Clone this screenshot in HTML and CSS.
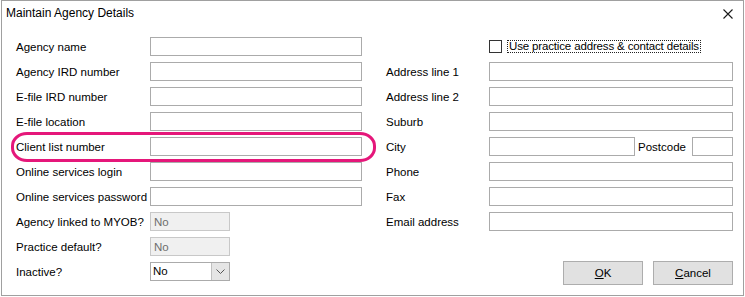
FILE: index.html
```html
<!DOCTYPE html>
<html lang="en">
<head>
  <meta charset="UTF-8">
  <title>Maintain Agency Details</title>
  <link rel="stylesheet" href="styles.css">
</head>
<body>
  <div class="dialog">
    <div class="title-bar">
      <span class="title">Maintain Agency Details</span>
      <svg class="close" width="10" height="10" viewBox="0 0 10 10">
        <path d="M0.5 0.5 L9.5 9.5 M9.5 0.5 L0.5 9.5" stroke="#1a1a1a" stroke-width="1.1" fill="none"/>
      </svg>
    </div>

    <div class="content">
      <!-- Left column -->
      <div class="form-grid left">
        <label>Agency name</label><input type="text">
        <label>Agency IRD number</label><input type="text">
        <label>E-file IRD number</label><input type="text">
        <label>E-file location</label><input type="text">
        <label>Client list number</label><input type="text">
        <label>Online services login</label><input type="text">
        <label>Online services password</label><input type="text">
        <label>Agency linked to MYOB?</label><input type="text" class="readonly short" value="No" readonly>
        <label>Practice default?</label><input type="text" class="readonly short" value="No" readonly>
        <label>Inactive?</label>
        <div class="select short">
          <span class="select-value">No</span>
          <span class="select-arrow">
            <svg width="9" height="5" viewBox="0 0 9 5"><path d="M0.5 0.5 L4.5 4.5 L8.5 0.5" stroke="#555" fill="none"/></svg>
          </span>
        </div>
      </div>

      <!-- Right column -->
      <div class="right">
        <div class="form-grid">
          <span></span>
          <div class="check-row">
            <span class="checkbox"></span>
            <span class="check-label">Use practice address &amp; contact details</span>
          </div>
          <label>Address line 1</label><input type="text">
          <label>Address line 2</label><input type="text">
          <label>Suburb</label><input type="text">
          <label>City</label>
          <div class="city-row">
            <input type="text" class="city">
            <label>Postcode</label>
            <input type="text" class="postcode">
          </div>
          <label>Phone</label><input type="text">
          <label>Fax</label><input type="text">
          <label>Email address</label><input type="text">
        </div>
        <div class="buttons">
          <button><u>O</u>K</button>
          <button><u>C</u>ancel</button>
        </div>
      </div>
    </div>

    <!-- Highlight annotation -->
    <div class="highlight"></div>
  </div>
</body>
</html>
```

FILE: styles.css
```css
/* Page reset */
body {
  margin: 0;
  padding-left: 1px;
  background: #fff;
  font-family: "Liberation Sans", Arial, sans-serif;
  font-size: 11.5px;
  color: #000;
}

/* Dialog window */
.dialog {
  position: relative;
  width: 741px;
  height: 294px;
  border: 1px solid #a0a0a0;
  background: #fff;
}

.title-bar {
  height: 24px;
  display: flex;
  align-items: center;
  justify-content: space-between;
  padding: 0 10px 0 4px;
}

.title {
  font-size: 12px;
}

.close {
  margin-top: 1px;
}

.content {
  display: flex;
  padding: 12px 0 0 14px;
}

/* Label + input grids */
.form-grid {
  display: grid;
  grid-auto-rows: 19px;
  row-gap: 6px;
  align-items: center;
}

.form-grid.left {
  grid-template-columns: 134px 212px;
}

.right .form-grid {
  grid-template-columns: 103px 244px;
}

.right {
  margin-left: 24px;
}

label {
  white-space: nowrap;
}

input {
  box-sizing: border-box;
  height: 19px;
  width: 100%;
  margin: 0;
  padding: 0 3px;
  border: 1px solid #ababab;
  font-family: inherit;
  font-size: 11.5px;
  background: #fff;
}

.short {
  width: 80px;
}

.readonly {
  background: #f0f0f0;
  border-color: #c8c8c8;
  color: #6d6d6d;
}

/* Dropdown */
.select {
  box-sizing: border-box;
  height: 19px;
  display: flex;
  border: 1px solid #ababab;
}

.select-value {
  flex: 1;
  padding-left: 2px;
  line-height: 17px;
}

.select-arrow {
  width: 17px;
  display: flex;
  align-items: center;
  justify-content: center;
  background: #e5e5e5;
  border-left: 1px solid #c0c0c0;
}

/* Checkbox row */
.check-row {
  display: flex;
  align-items: center;
  gap: 5px;
}

.checkbox {
  width: 11px;
  height: 11px;
  border: 1px solid #333;
  background: #fff;
}

.check-label {
  border: 1px dotted #222;
  padding: 0 1px;
  line-height: 11px;
  letter-spacing: -0.15px;
}

/* City / postcode */
.city-row {
  display: flex;
  align-items: center;
}

.city-row .city {
  width: 146px;
  margin-right: 3px;
}

.city-row .postcode {
  width: 41px;
  margin-left: auto;
}

/* OK / Cancel */
.buttons {
  display: flex;
  justify-content: flex-end;
  gap: 10px;
  margin-top: 30px;
}

.buttons button {
  width: 80px;
  height: 24px;
  background: #e1e1e1;
  border: 1px solid #adadad;
  font-family: inherit;
  font-size: 11.5px;
  color: #000;
  padding: 0;
}

/* Pink annotation around Client list number */
.highlight {
  position: absolute;
  left: 9px;
  top: 131px;
  width: 359px;
  height: 24px;
  border: 3px solid #e5177a;
  border-radius: 16px / 14px;
  pointer-events: none;
}
```
